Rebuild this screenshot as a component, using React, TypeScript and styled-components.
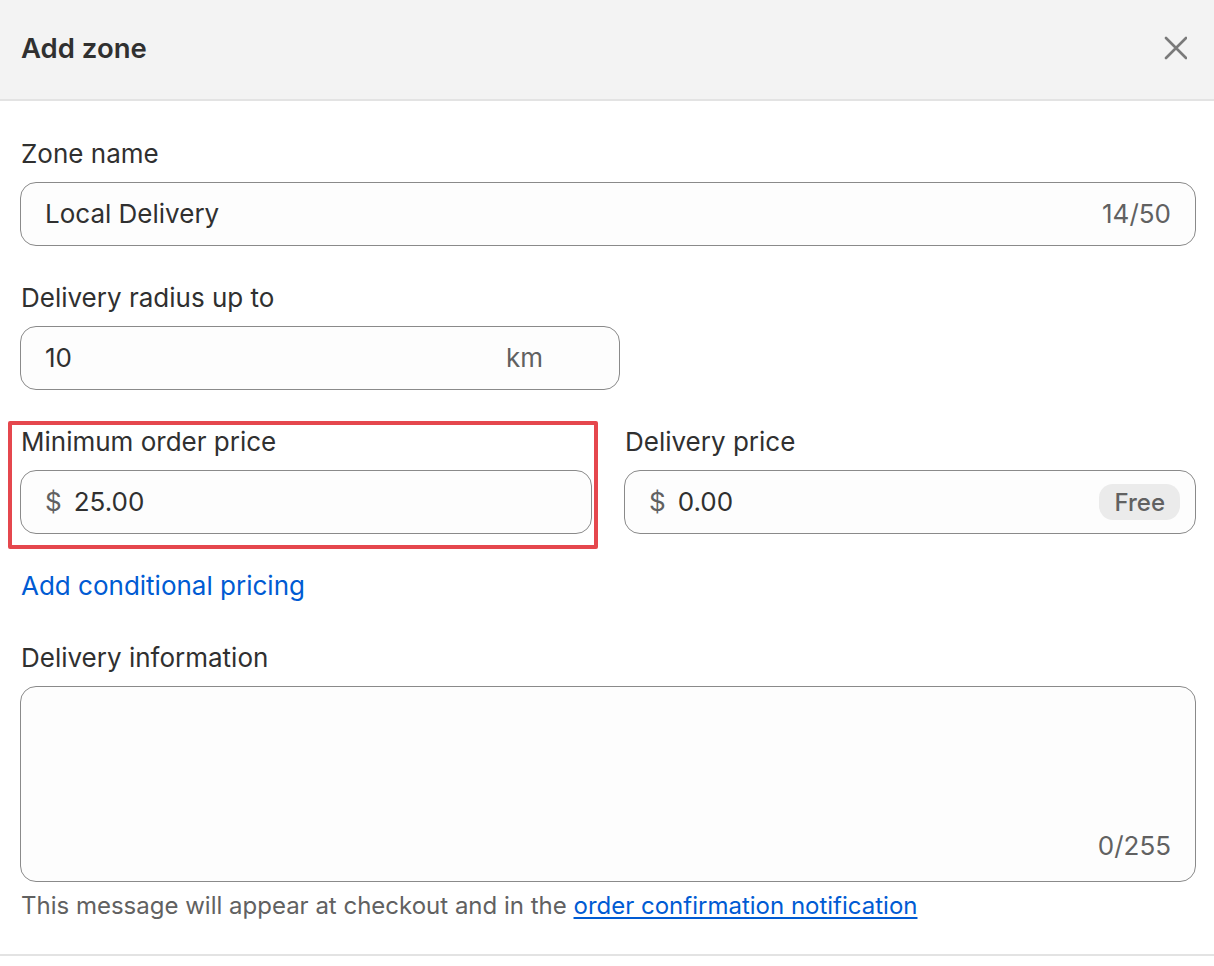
import React from "react";
import styled, { createGlobalStyle } from "styled-components";

const Global = createGlobalStyle`
  html, body { margin: 0; padding: 0; background: #ffffff; }
  body { font-family: Inter, "Noto Sans", "Liberation Sans", sans-serif; color: #303030; -webkit-font-smoothing: antialiased; }
  * { box-sizing: border-box; }
`;

const Modal = styled.div`
  width: 1214px;
  height: 966px;
  background: #ffffff;
  display: flex;
  flex-direction: column;
`;

const Header = styled.header`
  height: 101px;
  background: #f3f3f3;
  border-bottom: 2px solid #e3e3e3;
  display: flex;
  align-items: center;
  justify-content: space-between;
  padding: 0 26px 0 21px;
`;

const Title = styled.h2`
  margin: 0;
  font-size: 27.5px;
  font-weight: 600;
  line-height: 40px;
  color: #303030;
  padding-bottom: 4px;
`;

const CloseButton = styled.button`
  width: 26px;
  height: 26px;
  padding: 0;
  border: none;
  background: transparent;
  display: flex;
  align-items: center;
  justify-content: center;
  cursor: pointer;
  margin-bottom: 4px;
`;

const Body = styled.div`
  padding: 37px 18px 32px 20px;
  display: flex;
  flex-direction: column;
  border-bottom: 2px solid #e3e3e3;
`;

const Field = styled.div<{ $mt?: number }>`
  display: flex;
  flex-direction: column;
  gap: 12px;
  margin-top: ${(p) => p.$mt ?? 0}px;
  position: relative;
  flex: 1;
  min-width: 0;
`;

const Label = styled.label`
  font-size: 26px;
  line-height: 32px;
  color: #303030;
  padding-left: 1px;
`;

const InputBox = styled.div<{ $width?: string; $pr?: number }>`
  width: ${(p) => p.$width ?? "100%"};
  height: 64px;
  border: 1px solid #8a8a8a;
  border-radius: 16px;
  background: #fdfdfd;
  display: flex;
  align-items: center;
  padding: 0 ${(p) => p.$pr ?? 24}px 0 24px;
  gap: 12px;
`;

const Value = styled.span`
  flex: 1;
  font-size: 26px;
  color: #303030;
  line-height: 32px;
  white-space: nowrap;
`;

const Affix = styled.span`
  font-size: 26px;
  color: #616161;
  line-height: 32px;
`;

const Counter = styled.span`
  font-size: 26px;
  color: #616161;
  line-height: 32px;
`;

const Badge = styled.span`
  height: 36px;
  padding: 0 15px;
  border-radius: 14px;
  background: #ebebeb;
  color: #616161;
  font-size: 24px;
  font-weight: 500;
  display: flex;
  align-items: center;
`;

const Row = styled.div`
  display: flex;
  gap: 32px;
  margin-top: 36px;
`;

const Highlight = styled.div`
  position: absolute;
  left: -12px;
  right: -6px;
  top: -5px;
  bottom: -15px;
  border: 4px solid #e5474d;
  border-radius: 2px;
  pointer-events: none;
`;

const Link = styled.a<{ $underline?: boolean }>`
  color: #005bd3;
  text-decoration: ${(p) => (p.$underline ? "underline" : "none")};
  text-underline-offset: 3px;
  text-decoration-thickness: 2px;
  cursor: pointer;
`;

const LinkLine = styled.div`
  margin-top: 36px;
  font-size: 26px;
  line-height: 32px;
  padding-left: 1px;
`;

const TextArea = styled.div`
  height: 196px;
  border: 1px solid #8a8a8a;
  border-radius: 16px;
  background: #fdfdfd;
  display: flex;
  flex-direction: column;
  justify-content: flex-end;
  align-items: flex-end;
  padding: 0 24px 19px 24px;
`;

const Help = styled.p`
  margin: -4px 0 0 0;
  font-size: 24px;
  line-height: 32px;
  color: #616161;
  padding-left: 1px;
`;

const CloseIcon = () => (
  <svg width="24" height="24" viewBox="0 0 24 24" fill="none">
    <path d="M3 2L23 22M23 2L3 22" stroke="#7a7a7a" strokeWidth="2.6" strokeLinecap="round" />
  </svg>
);

export default function App() {
  return (
    <>
      <Global />
      <Modal>
        <Header>
          <Title>Add zone</Title>
          <CloseButton aria-label="Close">
            <CloseIcon />
          </CloseButton>
        </Header>
        <Body>
          <Field>
            <Label>Zone name</Label>
            <InputBox>
              <Value>Local Delivery</Value>
              <Counter>14/50</Counter>
            </InputBox>
          </Field>

          <Field $mt={36}>
            <Label>Delivery radius up to</Label>
            <InputBox $width="600px" $pr={76}>
              <Value>10</Value>
              <Affix>km</Affix>
            </InputBox>
          </Field>

          <Row>
            <Field>
              <Highlight />
              <Label>Minimum order price</Label>
              <InputBox>
                <Affix>$</Affix>
                <Value>25.00</Value>
              </InputBox>
            </Field>
            <Field>
              <Label>Delivery price</Label>
              <InputBox $pr={15}>
                <Affix>$</Affix>
                <Value>0.00</Value>
                <Badge>Free</Badge>
              </InputBox>
            </Field>
          </Row>

          <LinkLine>
            <Link>Add conditional pricing</Link>
          </LinkLine>

          <Field $mt={40}>
            <Label>Delivery information</Label>
            <TextArea>
              <Counter>0/255</Counter>
            </TextArea>
            <Help>
              This message will appear at checkout and in the{" "}
              <Link $underline>order confirmation notification</Link>
            </Help>
          </Field>
        </Body>
      </Modal>
    </>
  );
}
